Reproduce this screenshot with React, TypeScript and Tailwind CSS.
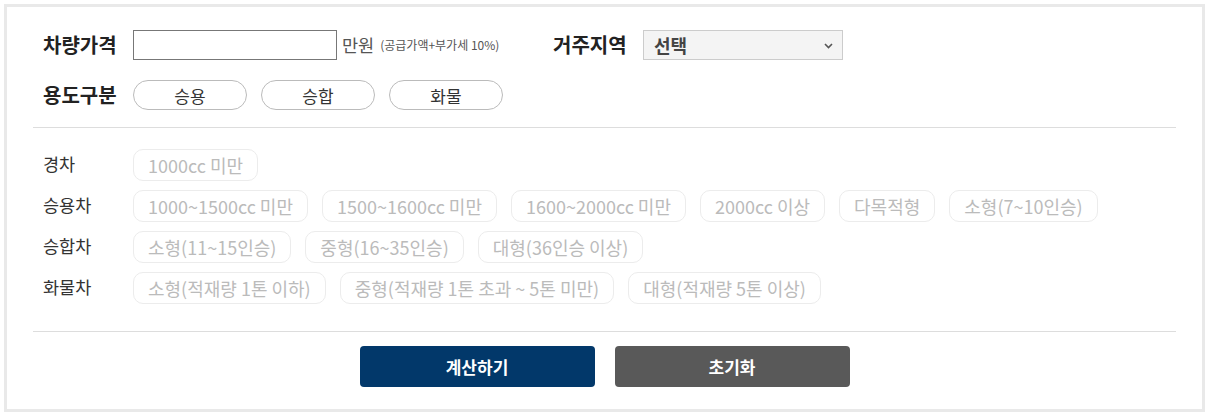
import React from "react";

const rows: { label: string; items: string[] }[] = [
  { label: "경차", items: ["1000cc 미만"] },
  {
    label: "승용차",
    items: ["1000~1500cc 미만", "1500~1600cc 미만", "1600~2000cc 미만", "2000cc 이상", "다목적형", "소형(7~10인승)"],
  },
  { label: "승합차", items: ["소형(11~15인승)", "중형(16~35인승)", "대형(36인승 이상)"] },
  { label: "화물차", items: ["소형(적재량 1톤 이하)", "중형(적재량 1톤 초과 ~ 5톤 미만)", "대형(적재량 5톤 이상)"] },
];

export default function App() {
  return (
    <div className="bg-white p-[4px] w-[1214px] h-[415px]" style={{ fontFamily: '"Noto Sans CJK KR", "Noto Sans", sans-serif' }}>
      <div className="w-[1201px] h-[408px] border-[3px] border-[#e9e9e9] px-[26px] pt-[23px] box-border">
        {/* Row 1 */}
        <div className="flex items-center h-[30px] pl-[10px]">
          <div className="w-[510px] flex items-center shrink-0">
            <div className="w-[90px] text-[20px] font-bold text-[#222] leading-none">차량가격</div>
            <input type="text" className="w-[204px] h-[30px] border border-[#777] bg-white outline-none" />
            <span className="ml-[5px] text-[17.5px] text-[#555] leading-none">만원</span>
            <span className="ml-[6px] text-[12px] text-[#555] leading-none">(공급가액+부가세 10%)</span>
          </div>
          <div className="w-[90px] text-[20px] font-bold text-[#222] leading-none">거주지역</div>
          <div className="relative w-[200px] h-[30px] border border-[#ccc] bg-[#f4f4f4] flex items-center pl-[10px]">
            <span className="text-[18px] font-bold text-[#444] leading-none">선택</span>
            <svg className="absolute right-[9px] top-[12px]" width="9" height="6" viewBox="0 0 9 6">
              <path d="M1 1 L4.5 4.5 L8 1" fill="none" stroke="#555" strokeWidth="1.6" />
            </svg>
          </div>
        </div>
        {/* Row 2 */}
        <div className="flex items-center h-[30px] mt-[20px] pl-[10px]">
          <div className="w-[90px] text-[20px] font-bold text-[#222] leading-none">용도구분</div>
          <div className="flex gap-[14px]">
            {["승용", "승합", "화물"].map((t) => (
              <button
                key={t}
                className="w-[114px] h-[30px] rounded-full border border-[#bbb] bg-white text-[17px] text-[#333] leading-none flex items-center justify-center"
              >
                {t}
              </button>
            ))}
          </div>
        </div>
        <div className="h-px bg-[#ddd] mt-[17px]" />
        {/* Categories */}
        <div className="flex flex-col gap-[9px] mt-[21px]">
          {rows.map((r) => (
            <div key={r.label} className="flex items-center pl-[10px]">
              <div className="w-[90px] text-[17.5px] text-[#333] leading-none self-start pt-[6px]">{r.label}</div>
              <div className="flex gap-[14px]">
                {r.items.map((it) => (
                  <div
                    key={it}
                    className="h-[32px] px-[14px] rounded-[10px] border border-[#ececec] text-[18px] text-[#bbb] leading-none flex items-center whitespace-nowrap"
                  >
                    {it}
                  </div>
                ))}
              </div>
            </div>
          ))}
        </div>
        <div className="h-px bg-[#ddd] mt-[27px]" />
        <div className="flex justify-center gap-[20px] mt-[14px]">
          <button className="w-[235px] h-[41px] rounded-[4px] bg-[#02386a] text-white text-[17px] font-bold leading-none">
            계산하기
          </button>
          <button className="w-[235px] h-[41px] rounded-[4px] bg-[#595959] text-white text-[17px] font-bold leading-none">
            초기화
          </button>
        </div>
      </div>
    </div>
  );
}
